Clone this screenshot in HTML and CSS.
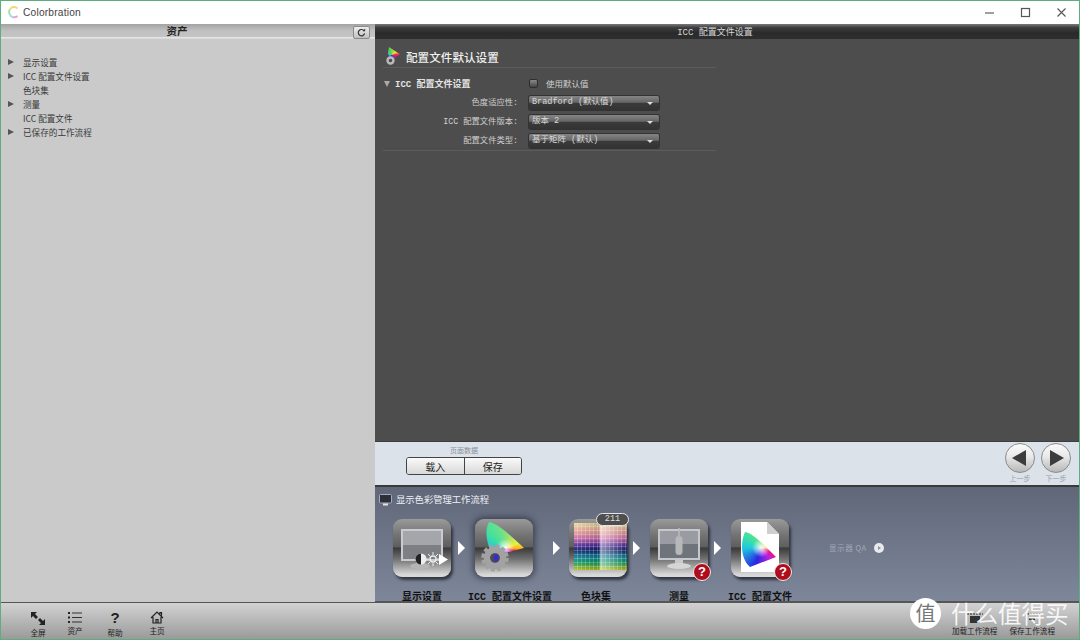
FILE: index.html
```html
<!DOCTYPE html>
<html lang="zh">
<head>
<meta charset="utf-8">
<title>Colorbration</title>
<link rel="stylesheet" href="styles.css">
</head>
<body>
<div class="app">
  <header class="titlebar">
    <svg class="logo" width="11" height="13" viewBox="0 0 11 13"><path d="M9.5 2.4A5 5 0 0 0 2 3.2" fill="none" stroke="#f2d878" stroke-width="2"/><path d="M2 3.2A5 5 0 0 0 1.6 8" fill="none" stroke="#a8e0a8" stroke-width="2"/><path d="M1.6 8A5 5 0 0 0 5 11.2" fill="none" stroke="#9adcf0" stroke-width="2"/><path d="M5 11.2A5 5 0 0 0 9.5 10" fill="none" stroke="#eda0dc" stroke-width="2"/></svg>
    <span class="apptitle">Colorbration</span>
    <div class="winbtns">
      <svg width="12" height="12" viewBox="0 0 12 12"><path d="M1 6h9" stroke="#888" stroke-width="1.6"/></svg>
      <svg width="12" height="12" viewBox="0 0 12 12"><rect x="1.5" y="1.5" width="8" height="8" fill="none" stroke="#555" stroke-width="1.2"/></svg>
      <svg width="12" height="12" viewBox="0 0 12 12"><path d="M1.5 1.5l8 8M9.5 1.5l-8 8" stroke="#555" stroke-width="1.1"/></svg>
    </div>
  </header>

  <aside class="assets">
    <div class="assets-head">
      <span>资产</span>
      <button class="refresh"><svg width="9" height="9" viewBox="0 0 9 9"><path d="M7.2 3A3.2 3.2 0 1 0 7.6 5.4" fill="none" stroke="#333" stroke-width="1.2"/><path d="M5.6 3.2h2.6V.6z" fill="#333"/></svg></button>
    </div>
    <ul class="tree">
      <li class="has">显示设置</li>
      <li class="has">ICC 配置文件设置</li>
      <li>色块集</li>
      <li class="has">测量</li>
      <li>ICC 配置文件</li>
      <li class="has">已保存的工作流程</li>
    </ul>
  </aside>

  <main class="content">
    <div class="content-head">ICC 配置文件设置</div>
    <section class="settings">
      <div class="settings-inner">
        <div class="section-title">
          <span class="mini-icon"><i class="mini-gamut"></i><svg class="mini-gear" width="9" height="9" viewBox="0 0 9 9"><circle cx="4.5" cy="4.5" r="3" fill="none" stroke="#bbb" stroke-width="2.4"/></svg></span>
          <h1>配置文件默认设置</h1>
        </div>
        <div class="group">
          <div class="group-head">
            <span class="tri"></span>
            <span class="group-name">ICC 配置文件设置</span>
            <span class="check"></span>
            <span class="check-label">使用默认值</span>
          </div>
          <div class="field"><label>色度适应性:</label><div class="select">Bradford (默认值)</div></div>
          <div class="field"><label>ICC 配置文件版本:</label><div class="select">版本 2</div></div>
          <div class="field"><label>配置文件类型:</label><div class="select">基于矩阵 (默认)</div></div>
        </div>
      </div>
    </section>

    <section class="pagebar">
      <div class="pagedata">
        <div class="cap">页面数据</div>
        <div class="btns"><button>载入</button><button>保存</button></div>
      </div>
      <div class="navs">
        <div class="nav"><span class="round"><i class="left"></i></span><em>上一步</em></div>
        <div class="nav"><span class="round"><i class="right"></i></span><em>下一步</em></div>
      </div>
    </section>

    <section class="workflow">
      <div class="wf-title">
        <svg width="13" height="12" viewBox="0 0 13 12"><rect x=".5" y=".5" width="12" height="8.5" rx="1" fill="#2c3038" stroke="#aab"/><rect x="4" y="9.5" width="5" height="2" fill="#dfe3ea"/></svg>
        <span>显示色彩管理工作流程</span>
      </div>
      <div class="steps">
        <div class="step">
          <div class="tile">
            <svg width="58" height="58" viewBox="0 0 58 58">
              <rect x="9" y="11" width="40" height="30" fill="#7d7f85" stroke="#c9cbd0" stroke-width="2"/>
              <rect x="10" y="12" width="38" height="14" fill="#a4a6ac"/>
              <ellipse cx="27" cy="47" rx="10" ry="3" fill="#b5b5b5"/>
              <circle cx="28" cy="40" r="5.5" fill="#eee"/><path d="M28 34.5a5.5 5.5 0 0 0 0 11z" fill="#222"/>
              <circle cx="40" cy="40" r="3" fill="none" stroke="#eee" stroke-width="1.4"/>
              <path d="M40 33v3M40 44v3M33 40h3M44 40h3M35 35l2 2M43 43l2 2M45 35l-2 2M37 43l-2 2" stroke="#eee"/>
              <path d="M46 35l9 5.5-9 5.5z" fill="#fff"/>
            </svg>
          </div>
          <div class="step-label">显示设置</div>
        </div>
        <i class="arrow a1"></i>
        <div class="step">
          <div class="tile active">
            <i class="gamut g-icc"></i>
            <svg class="over" width="58" height="58" viewBox="0 0 58 58">
              <circle cx="20" cy="39" r="8" fill="none" stroke="#a2a2a2" stroke-width="6.5"/>
              <circle cx="20" cy="39" r="12" fill="none" stroke="#a2a2a2" stroke-width="3.5" stroke-dasharray="4 2.3"/>
              <circle cx="20" cy="39" r="4.8" fill="#4a4a58"/><ellipse cx="21" cy="39" rx="2.2" ry="3.4" fill="#3a2bd0"/>
            </svg>
          </div>
          <div class="step-label">ICC 配置文件设置</div>
        </div>
        <i class="arrow a2"></i>
        <div class="step">
          <div class="tile"><div class="palette"></div><span class="count">211</span></div>
          <div class="step-label">色块集</div>
        </div>
        <i class="arrow a3"></i>
        <div class="step">
          <div class="tile">
            <svg width="58" height="58" viewBox="0 0 58 58">
              <rect x="9" y="11" width="40" height="29" fill="#6f737b" stroke="#c5c8cd" stroke-width="2"/>
              <rect x="10" y="12" width="38" height="13" fill="#999ca2"/>
              <rect x="25" y="41" width="8" height="4" fill="#c9c9c9"/>
              <ellipse cx="29" cy="47" rx="12" ry="3" fill="#d5d5d5"/>
              <rect x="25.5" y="17" width="7" height="19" rx="3.5" fill="#b8b8b8"/>
              <path d="M29 9v8" stroke="#bbb" stroke-width="1.5"/>
            </svg>
            <span class="qmark">?</span>
          </div>
          <div class="step-label">测量</div>
        </div>
        <i class="arrow a4"></i>
        <div class="step">
          <div class="tile">
            <svg width="58" height="58" viewBox="0 0 58 58"><path d="M10 3h26l12 12v38H10z" fill="#fff"/><path d="M36 3l12 12H36z" fill="#cfcfcf"/></svg>
            <i class="gamut g-prof"></i>
            <span class="qmark">?</span>
          </div>
          <div class="step-label">ICC 配置文件</div>
        </div>
        <div class="qa"><span>显示器 QA</span><i class="qa-go"></i></div>
      </div>
    </section>
  </main>

  <footer class="toolbar">
    <div class="tools">
      <div class="tool t1"><svg width="16" height="15" viewBox="0 0 16 15"><path d="M1 1h6L5 3l3 3-2 2-3-3-2 2zM15 14H9l2-2-3-3 2-2 3 3 2-2z" fill="#222"/></svg><span>全屏</span></div>
      <div class="tool t2"><svg width="14" height="13" viewBox="0 0 14 13"><path d="M4 2h10M4 6.5h10M4 11h10" stroke="#333" stroke-width="1.2"/><rect x="0" y="1" width="2" height="2" fill="#222"/><rect x="0" y="5.5" width="2" height="2" fill="#222"/><rect x="0" y="10" width="2" height="2" fill="#222"/></svg><span>资产</span></div>
      <div class="tool t3"><b class="help">?</b><span>帮助</span></div>
      <div class="tool t4"><svg width="14" height="13" viewBox="0 0 14 13"><path d="M1 7l6-6 6 6M3 6v6h8V6M6 12V8.5h2V12M10 3V1.5h1.5v3" fill="none" stroke="#222" stroke-width="1.2"/></svg><span>主页</span></div>
    </div>
    <div class="tools-right">
      <div class="tool"><svg width="16" height="10" viewBox="0 0 16 10"><rect x="3" y="3" width="10" height="7" fill="#333"/><path d="M0 1h16" stroke="#222" stroke-dasharray="2 1"/></svg><span>加载工作流程</span></div>
      <div class="tool"><svg width="16" height="10" viewBox="0 0 16 10"><path d="M0 1h16" stroke="#222" stroke-dasharray="2 1"/><path d="M5 5h6v2H5z" fill="#333"/></svg><span>保存工作流程</span></div>
    </div>
    <div class="watermark"><span class="wm-badge">值</span><span class="wm-text">什么值得买</span></div>
  </footer>
</div>
</body>
</html>
```
FILE: styles.css
```css
* { box-sizing: border-box; }
html, body { margin: 0; height: 100%; overflow: hidden; }
body { font-family: "Noto Sans CJK SC", "Liberation Sans", sans-serif; }
ul { margin: 0; padding: 0; list-style: none; }
h1 { margin: 0; font: inherit; }
i, em { font-style: normal; display: block; }

.app {
  width: 1080px; height: 640px;
  display: grid;
  grid-template-columns: 374px 1fr;
  grid-template-rows: 23px 1fr 37px;
  border: 1px solid #5dae7e;
  background: #fff;
}

.titlebar {
  grid-column: 1 / 3;
  display: flex; align-items: center;
  padding-left: 7px;
  background: #fff;
}
.logo { margin-right: 4px; }
.apptitle { font: 10.2px "Liberation Sans", sans-serif; color: #444; letter-spacing: .2px; }
.winbtns { margin-left: auto; display: flex; gap: 24px; padding-right: 11px; }

.assets { background: #cacaca; display: flex; flex-direction: column; min-height: 0; }
.assets-head {
  height: 15px; flex: none; position: relative;
  display: flex; align-items: center; justify-content: center;
  padding-right: 22px;
  background: linear-gradient(#a3a3a3, #c0c0c0 45%, #c4c4c4 85%, #f2f2f2 92%, #cacaca);
  font-size: 10.5px; font-weight: 700; color: #222; line-height: 1;
}
.refresh {
  position: absolute; right: 5px; top: 2px;
  width: 17px; height: 13px; padding: 0;
  display: flex; align-items: center; justify-content: center;
  border: 1px solid #8a8a8a; border-radius: 2px;
  background: linear-gradient(#efefef, #c0c0c0);
}
.tree { padding: 16px 0 0 22px; }
.tree li { position: relative; height: 14px; line-height: 14px; font-size: 8.6px; color: #3a3a3a; white-space: nowrap; }
.tree li.has::before {
  content: ""; position: absolute; left: -15px; top: 4px;
  border-left: 6px solid #555; border-top: 3px solid transparent; border-bottom: 3px solid transparent;
}

.content { display: flex; flex-direction: column; min-height: 0; background: #4d4d4d; }
.content-head {
  height: 15px; flex: none;
  display: flex; align-items: center; justify-content: center;
  padding-right: 24px;
  background: linear-gradient(#7a7a7a, #3c3c3c 25%, #2a2a2a 60%, #2e2e2e);
  font: 9px "Liberation Mono", "Noto Sans CJK SC", monospace; color: #d6d6d6;
}

.settings { flex: 1; min-height: 0; padding: 0 8px; }
.settings-inner { width: 333px; }
.section-title {
  height: 29px; display: flex; align-items: center; gap: 6px; padding-left: 3px;
  border-bottom: 1px solid #5c5c5c;
}
.mini-icon { position: relative; width: 14px; height: 18px; margin-top: 6px; }
.mini-gamut {
  position: absolute; left: 2px; top: 0; width: 12px; height: 13px;
  background: conic-gradient(from -20deg at 30% 60%, #4fd04f, #f0e030 80deg, #f0205a 110deg, #3030e0 200deg, #30d0d0 300deg, #4fd04f);
  clip-path: polygon(8% 0, 100% 55%, 25% 100%, 0 50%);
}
.mini-gear { position: absolute; left: 0; bottom: 0; }
.section-title h1 { font-size: 11.6px; font-weight: 500; color: #f0f0f0; line-height: 1; margin-top: 9px; }

.group { border-bottom: 1px solid #5c5c5c; }
.group-head { height: 25px; display: flex; align-items: center; padding-top: 6px; }
.tri { width: 0; margin: 0 5px 0 1px; border-top: 6px solid #aaa; border-left: 3.5px solid transparent; border-right: 3.5px solid transparent; }
.group-name { width: 134px; font: 700 9px "Liberation Mono", "Noto Sans CJK SC", monospace; color: #e4e4e4; }
.check {
  width: 9px; height: 9px; border-radius: 2px; margin-right: 8px;
  background: linear-gradient(#8a8a8a, #444); border: 1px solid #2e2e2e;
}
.check-label { font-size: 8.5px; line-height: 10px; margin-top: -2px; color: #cfcfcf; }
.field { height: 19px; display: flex; align-items: center; }
.field label { width: 135px; margin-top: -3px; text-align: right; font: 8.3px "Liberation Mono", "Noto Sans CJK SC", monospace; color: #cfcfcf; }
.select {
  position: relative; width: 130px; height: 14px; margin-left: 11px;
  padding-left: 3px;
  font: 8.5px/13px "Liberation Mono", "Noto Sans CJK SC", monospace; color: #d8d8d8;
  border-radius: 2px; box-shadow: 0 0 0 1px #333;
  background: linear-gradient(#858585, #666 45%, #3a3a3a 52%, #333);
}
.select::after {
  content: ""; position: absolute; right: 6px; top: 6px;
  border-top: 3px solid #ddd; border-left: 3.5px solid transparent; border-right: 3.5px solid transparent;
}

.pagebar {
  height: 46px; flex: none; position: relative;
  display: flex; justify-content: space-between;
  background: #dce2ea;
  border-top: 1px solid #3d3d3d;
  border-bottom: 2px solid #3a3a3a;
}
.pagedata { margin-left: 31px; }
.cap { width: 116px; text-align: center; font-size: 7px; line-height: 1; color: #8a8f96; margin-top: 5px; }
.btns { display: flex; width: 116px; height: 18px; margin-top: 3px; border: 1px solid #444; border-radius: 3px; overflow: hidden; }
.btns button {
  flex: 1; padding: 0; border: 0;
  font: 10px "Noto Sans CJK SC", sans-serif; color: #222;
  background: linear-gradient(#fafafa, #d8d8d8);
}
.btns button + button { border-left: 1px solid #444; }
.navs { display: flex; gap: 6px; padding-right: 8px; padding-top: 1px; }
.nav { width: 30px; display: flex; flex-direction: column; align-items: center; }
.round {
  width: 30px; height: 30px; border-radius: 50%;
  display: flex; align-items: center; justify-content: center;
  border: 1px solid #8b8b8b;
  background: linear-gradient(#fbfbfb, #e8e8e8 45%, #b8b8b8);
}
.left { border-right: 14px solid #3c3c3c; border-top: 8px solid transparent; border-bottom: 8px solid transparent; margin-right: 2px; }
.right { border-left: 14px solid #3c3c3c; border-top: 8px solid transparent; border-bottom: 8px solid transparent; margin-left: 2px; }
.nav em { font-size: 7px; line-height: 1; color: #9a9ea6; margin-top: 2px; }

.workflow {
  height: 115px; flex: none; overflow: hidden;
  background: linear-gradient(#5f6779, #7e8799);
  border-bottom: 1px solid #565656;
}
.wf-title { display: flex; align-items: center; gap: 4px; padding: 6px 0 0 4px; height: 20px; font-size: 9.3px; color: #eef0f4; line-height: 1; }
.steps { display: flex; align-items: flex-start; padding: 12px 0 0 18px; }
.step { position: relative; width: 58px; flex: none; }
.tile {
  position: relative; width: 58px; height: 58px; border-radius: 9px;
  background: linear-gradient(#9a9a9a, #737373 28%, #5e5e5e 48%, #3a3a3a 50%, #6e6e6e 68%, #d8d8d8 96%);
  box-shadow: 2px 3px 3px rgba(25, 28, 38, .75);
}
.tile svg { display: block; position: absolute; left: 0; top: 0; }
.tile.active { box-shadow: 0 0 6px 2px rgba(40, 45, 60, .7); }
.step-label {
  position: absolute; top: 74px; left: 50%; transform: translateX(-50%);
  white-space: nowrap; font: 700 10px "Liberation Mono", "Noto Sans CJK SC", monospace; color: #111; line-height: 1;
}
.step:nth-child(3) .step-label { margin-left: 6px; }
.step:nth-child(5) .step-label { margin-left: -2px; }
.arrow {
  flex: none; align-self: flex-start; margin-top: 22px;
  border-left: 7px solid #fff; border-top: 7px solid transparent; border-bottom: 7px solid transparent;
}
.a1 { margin-left: 7px; margin-right: 10px; }
.a2 { margin-left: 20px; margin-right: 9px; }
.a3 { margin-left: 6px; margin-right: 10px; }
.a4 { margin-left: 6px; margin-right: 10px; }

.gamut {
  position: absolute; width: 58px; height: 58px; left: 0; top: 0;
  background:
    radial-gradient(circle at 52% 50%, rgba(255,255,255,.95), rgba(255,255,255,0) 22%),
    conic-gradient(from 0deg at 52% 50%, #7fe07f, #e8f040 70deg, #ffb020 92deg, #f01060 108deg, #c020e0 140deg, #2828e0 200deg, #20c8e0 270deg, #40e0a0 310deg, #7fe07f);
  clip-path: path("M14 3C22 4 34 15 49 29L18 37C12 26 9 12 14 3Z");
}
.g-prof { clip-path: path("M14 13C22 14 34 27 45 38L19 48C10 40 9 24 14 13Z"); }

.palette {
  position: absolute; left: 5px; top: 4px; width: 53px; height: 47px;
  background:
    repeating-linear-gradient(90deg, transparent 0 3px, rgba(255,255,255,.22) 3px 4px),
    repeating-linear-gradient(0deg, transparent 0 3px, rgba(255,255,255,.22) 3px 4px),
    linear-gradient(90deg, rgba(255,255,255,.1), rgba(0,0,0,.15) 47%, rgba(255,255,255,.5) 50%, rgba(0,0,0,.15) 100%),
    linear-gradient(#e8dc98, #e89a98 20%, #c060a8 35%, #4a2898 48%, #0a1c68 58%, #067c98 72%, #0c9c5c 85%, #c0c010 100%);
}
.count {
  position: absolute; left: 27px; top: -6px; width: 33px; height: 13px; border-radius: 7px;
  border: 1.5px solid #e6e6e6; background: #4e4e4e; color: #ddd; text-align: center;
  font: 8.5px/10px "Liberation Mono", monospace;
}
.qmark {
  position: absolute; right: -3px; bottom: -4px; width: 18px; height: 18px; border-radius: 50%;
  border: 1.5px solid #eee; background: #b00d1c; color: #fff; text-align: center;
  font: 700 13px/15px "Liberation Sans", sans-serif;
}
.qa { display: flex; align-items: center; gap: 7px; margin: 23px 0 0 40px; font-size: 7.6px; color: #a2a8b6; white-space: nowrap; letter-spacing: .5px; }
.qa-go {
  position: relative; width: 10px; height: 10px; border-radius: 50%; background: #e8eaee;
}
.qa-go::after {
  content: ""; position: absolute; left: 4px; top: 3px;
  border-left: 3px solid #8d95a6; border-top: 2px solid transparent; border-bottom: 2px solid transparent;
}

.toolbar {
  grid-column: 1 / 3; position: relative;
  display: flex; justify-content: space-between;
  background: linear-gradient(#d2d2d2, #9a9a9a);
  border-top: 1px solid #565656;
}
.tools { display: flex; padding: 8px 0 0 0; }
.tools-right { display: flex; gap: 12px; padding: 10px 24px 0 0; }
.tool { display: flex; flex-direction: column; align-items: center; font-size: 7.6px; line-height: 1; color: #222; white-space: nowrap; }
.tool span { margin-top: 3px; }
.tools-right .tool span { margin-top: 4px; }
.tools .tool { width: 30px; }
.t1 { margin-left: 22px; }
.t2 { margin-left: 7px; }
.t3 { margin-left: 10px; }
.t4 { margin-left: 12px; }
.help { font: 700 15px/13px "Liberation Sans", sans-serif; color: #222; height: 13px; margin-bottom: 2px; }
.watermark {
  position: absolute; left: 909px; top: -5px;
  display: flex; align-items: center; gap: 10px; pointer-events: none;
}
.wm-badge {
  width: 31px; height: 31px; border-radius: 50%; background: #fff; color: #777;
  text-align: center; font-size: 20px; line-height: 30px;
}
.wm-text { font-size: 23.5px; line-height: 31px; color: rgba(255,255,255,.88); }
```
